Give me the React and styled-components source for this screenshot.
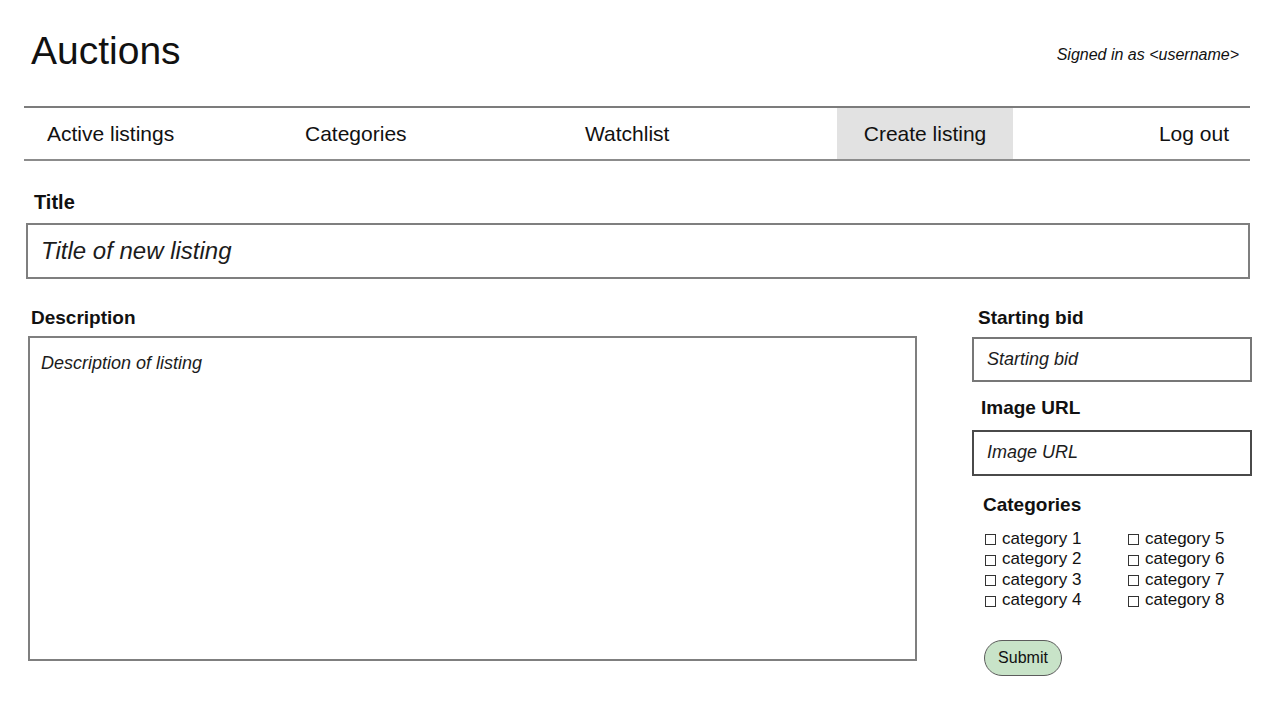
import styled, { createGlobalStyle } from 'styled-components';

const GlobalStyle = createGlobalStyle`
  body {
    margin: 0;
    background: #fff;
    font-family: 'Liberation Sans', Arial, sans-serif;
    color: #111;
  }
`;

const Page = styled.div`
  width: 1280px;
  height: 720px;
  overflow: hidden;
`;

const Header = styled.header`
  display: flex;
  justify-content: space-between;
  align-items: flex-start;
  height: 106px;
  padding: 29px 41px 0 31px;
  box-sizing: border-box;
`;

const Brand = styled.h1`
  margin: 0;
  font-size: 39px;
  font-weight: 400;
  line-height: 1.15;
`;

const SignedIn = styled.div`
  margin-top: 17px;
  font-size: 16px;
  font-style: italic;
  line-height: 1.15;
`;

const Nav = styled.nav`
  display: grid;
  grid-template-columns: 256px 280px 277px 176px 1fr;
  height: 55px;
  margin: 0 30px 0 24px;
  border-top: 2px solid #7c7c7c;
  border-bottom: 2px solid #8c8c8c;
  box-sizing: border-box;
`;

const NavItem = styled.a`
  display: flex;
  align-items: center;
  justify-content: ${(p) => p.$align || 'flex-start'};
  padding: 0 ${(p) => p.$right || 0}px 0 ${(p) => p.$left || 0}px;
  font-size: 21px;
  color: #111;
  text-decoration: none;
  background: ${(p) => (p.$active ? '#e2e2e2' : 'transparent')};
  cursor: pointer;
`;

const Form = styled.form`
  padding: 0 28px 0 26px;
`;

const Label = styled.label`
  display: block;
  font-size: ${(p) => p.$size || 19}px;
  font-weight: 700;
  line-height: 1.15;
  margin-top: ${(p) => p.$top || 0}px;
  margin-bottom: ${(p) => p.$bottom || 8}px;
  padding-left: ${(p) => p.$indent || 0}px;
`;

const TextInput = styled.input`
  display: block;
  width: ${(p) => (p.$wide ? 'calc(100% - 2px)' : '100%')};
  height: ${(p) => p.$height}px;
  box-sizing: border-box;
  border: 2px solid ${(p) => p.$tone || '#7f7f7f'};
  padding: 0 13px;
  font-family: inherit;
  font-size: ${(p) => p.$size}px;
  font-style: italic;
  color: #111;
  outline: none;

  &::placeholder {
    color: #1c1c1c;
    opacity: 1;
  }
`;

const TextArea = styled.textarea`
  display: block;
  width: 100%;
  height: 325px;
  box-sizing: border-box;
  border: 2px solid #7f7f7f;
  padding: 15px 11px;
  font-family: inherit;
  font-size: 18px;
  font-style: italic;
  line-height: 1.15;
  resize: none;
  outline: none;

  &::placeholder {
    color: #1c1c1c;
    opacity: 1;
  }
`;

const Lower = styled.div`
  display: grid;
  grid-template-columns: 889px 280px;
  column-gap: 55px;
  margin-top: 28px;
  padding-left: 2px;
`;

const Side = styled.div`
  display: flex;
  flex-direction: column;
  align-items: flex-start;
`;

const CheckGrid = styled.div`
  display: grid;
  grid-template-columns: 143px 1fr;
  grid-auto-flow: column;
  grid-template-rows: repeat(4, 20.5px);
  margin-left: 13px;
  font-size: 17px;
  line-height: 20.5px;
`;

const CheckItem = styled.label`
  display: flex;
  align-items: center;
  white-space: nowrap;
`;

const Box = styled.span`
  display: inline-block;
  width: 9px;
  height: 9px;
  border: 1px solid #333;
  margin-right: 6px;
  margin-top: 2px;
`;

const Submit = styled.button`
  margin: 29px 0 0 12px;
  width: 78px;
  height: 36px;
  border: 1.5px solid #5c5c5c;
  border-radius: 18px;
  background: #c8e3c8;
  font-family: inherit;
  font-size: 16px;
  color: #111;
  cursor: pointer;
`;

const links = [
  { text: 'Active listings', left: 23 },
  { text: 'Categories', left: 25 },
  { text: 'Watchlist', left: 25 },
  { text: 'Create listing', align: 'center', active: true },
  { text: 'Log out', align: 'flex-end', right: 21 },
];

const categories = [1, 2, 3, 4, 5, 6, 7, 8];

export default function App() {
  return (
    <Page>
      <GlobalStyle />
      <Header>
        <Brand>Auctions</Brand>
        <SignedIn>Signed in as &lt;username&gt;</SignedIn>
      </Header>
      <Nav>
        {links.map((l) => (
          <NavItem
            key={l.text}
            $left={l.left}
            $right={l.right}
            $align={l.align}
            $active={l.active}
          >
            {l.text}
          </NavItem>
        ))}
      </Nav>
      <Form onSubmit={(e) => e.preventDefault()}>
        <Label $size={20} $top={30} $bottom={9} $indent={8}>
          Title
        </Label>
        <TextInput $wide $height={56} $size={24} placeholder="Title of new listing" />
        <Lower>
          <div>
            <Label $indent={3} $bottom={7}>
              Description
            </Label>
            <TextArea placeholder="Description of listing" />
          </div>
          <Side>
            <Label $indent={6} $bottom={8}>
              Starting bid
            </Label>
            <TextInput $height={45} $size={18} $tone="#777" placeholder="Starting bid" />
            <Label $indent={9} $top={15} $bottom={11}>
              Image URL
            </Label>
            <TextInput $height={46} $size={18} $tone="#4a4a4a" placeholder="Image URL" />
            <Label $indent={11} $top={18} $bottom={13}>
              Categories
            </Label>
            <CheckGrid>
              {categories.map((n) => (
                <CheckItem key={n}>
                  <Box />
                  category {n}
                </CheckItem>
              ))}
            </CheckGrid>
            <Submit type="submit">Submit</Submit>
          </Side>
        </Lower>
      </Form>
    </Page>
  );
}
